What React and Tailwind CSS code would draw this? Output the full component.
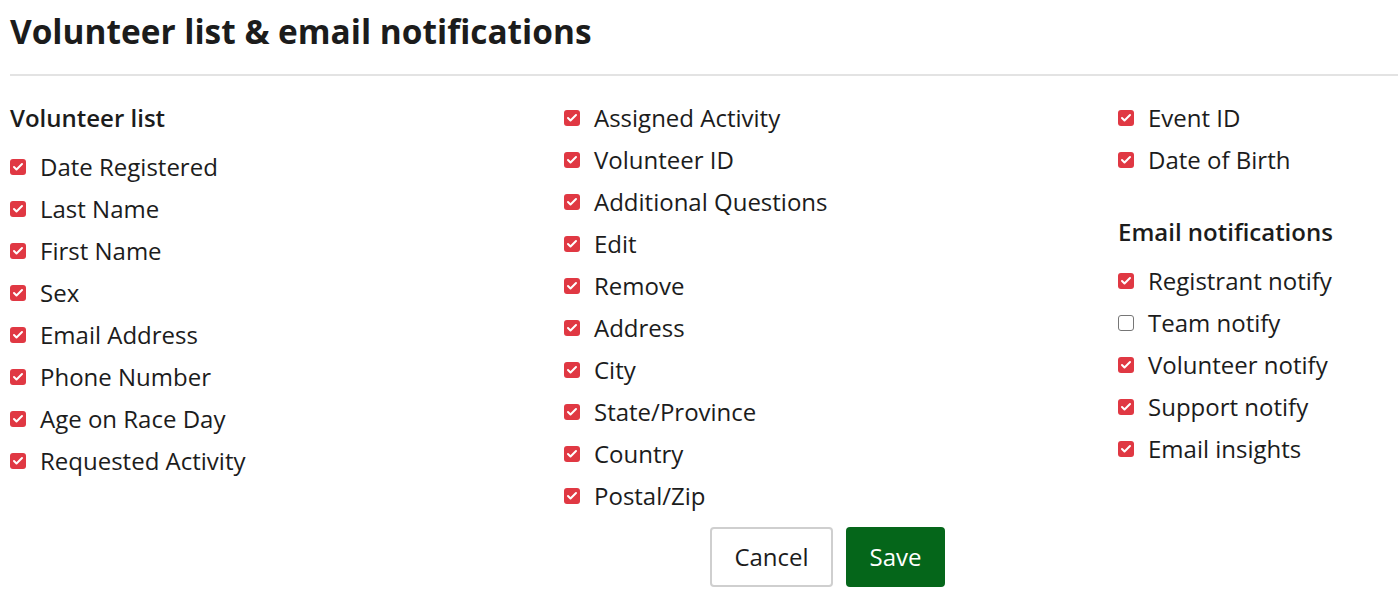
import { Check } from "lucide-react";

const col1 = [
  "Date Registered",
  "Last Name",
  "First Name",
  "Sex",
  "Email Address",
  "Phone Number",
  "Age on Race Day",
  "Requested Activity",
];

const col2 = [
  "Assigned Activity",
  "Volunteer ID",
  "Additional Questions",
  "Edit",
  "Remove",
  "Address",
  "City",
  "State/Province",
  "Country",
  "Postal/Zip",
];

const col3 = ["Event ID", "Date of Birth"];

const notifications = [
  { label: "Registrant notify", checked: true },
  { label: "Team notify", checked: false },
  { label: "Volunteer notify", checked: true },
  { label: "Support notify", checked: true },
  { label: "Email insights", checked: true },
];

function CheckRow({ label, checked = true }) {
  return (
    <label className="flex h-[42px] items-center">
      {checked ? (
        <span className="flex h-4 w-4 items-center justify-center rounded-[3px] bg-[#e03843]">
          <Check className="h-3 w-3 text-white" strokeWidth={4} />
        </span>
      ) : (
        <span className="h-4 w-4 rounded-[3px] border border-[#767676] bg-white" />
      )}
      <span className="ml-[14px] text-[24px] text-[#1c1c1c]">{label}</span>
    </label>
  );
}

function Heading({ children, className = "" }) {
  return (
    <div className={`flex h-[42px] items-center text-[24px] font-semibold text-[#1c1c1c] ${className}`}>
      {children}
    </div>
  );
}

export default function App() {
  return (
    <div className="w-[1398px] bg-white pl-[10px] font-['Open_Sans',sans-serif]">
      <h1 className="flex h-[62px] items-center text-[33.4px] font-bold text-[#1c1c1c]">
        Volunteer list &amp; email notifications
      </h1>
      <hr className="mt-[12px] border-t-2 border-[#e3e3e3]" />

      <div className="mt-[21px] grid grid-cols-[554px_554px_1fr]">
        <div>
          <Heading className="mb-[7px]">Volunteer list</Heading>
          {col1.map((l) => (
            <CheckRow key={l} label={l} />
          ))}
        </div>
        <div>
          {col2.map((l) => (
            <CheckRow key={l} label={l} />
          ))}
        </div>
        <div>
          {col3.map((l) => (
            <CheckRow key={l} label={l} />
          ))}
          <Heading className="mt-[30px] mb-[7px]">Email notifications</Heading>
          {notifications.map((n) => (
            <CheckRow key={n.label} label={n.label} checked={n.checked} />
          ))}
        </div>
      </div>

      <div className="mt-[10px] flex gap-[13px] pb-[17px] pl-[700px]">
        <button className="h-[60px] w-[123px] rounded-[4px] border-2 border-[#cfcfcf] bg-white text-[24px] text-[#1c1c1c]">
          Cancel
        </button>
        <button className="h-[60px] w-[99px] rounded-[4px] bg-[#05661a] text-[24px] text-white">
          Save
        </button>
      </div>
    </div>
  );
}
